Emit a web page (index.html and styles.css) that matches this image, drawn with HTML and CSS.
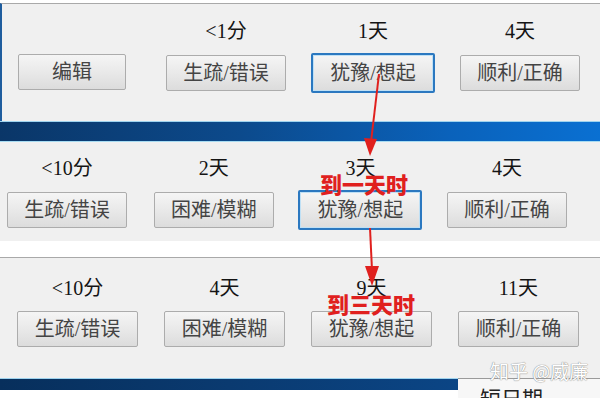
FILE: index.html
```html
<!DOCTYPE html>
<html lang="zh-CN">
<head>
<meta charset="utf-8">
<title>Anki 复习间隔</title>
<link rel="stylesheet" href="styles.css">
</head>
<body>
<div class="screen">
  <section class="panel panel-1">
    <div class="cell cell-edit"><span class="label">&nbsp;</span><button class="btn">编辑</button></div>
    <div class="cell"><span class="label">&lt;1分</span><button class="btn">生疏/错误</button></div>
    <div class="cell"><span class="label">1天</span><button class="btn btn-focus">犹豫/想起</button></div>
    <div class="cell"><span class="label">4天</span><button class="btn">顺利/正确</button></div>
  </section>
  <div class="band band-top"></div>
  <section class="panel panel-2">
    <div class="cell"><span class="label">&lt;10分</span><button class="btn">生疏/错误</button></div>
    <div class="cell"><span class="label">2天</span><button class="btn">困难/模糊</button></div>
    <div class="cell"><span class="label">3天</span><button class="btn btn-focus">犹豫/想起</button></div>
    <div class="cell"><span class="label">4天</span><button class="btn">顺利/正确</button></div>
  </section>
  <div class="gap"></div>
  <section class="panel panel-3">
    <div class="cell"><span class="label">&lt;10分</span><button class="btn">生疏/错误</button></div>
    <div class="cell"><span class="label">4天</span><button class="btn">困难/模糊</button></div>
    <div class="cell"><span class="label">9天</span><button class="btn">犹豫/想起</button></div>
    <div class="cell"><span class="label">11天</span><button class="btn">顺利/正确</button></div>
  </section>
  <div class="footer">
    <div class="band band-bottom"></div>
    <div class="tail">短日期</div>
  </div>

  <svg class="annot" width="600" height="398" viewBox="0 0 600 398">
    <line x1="379" y1="74" x2="371" y2="142" stroke="#e0201e" stroke-width="2"/>
    <polygon points="364,138 377,139 370,156" fill="#e0201e"/>
    <line x1="370" y1="228" x2="372" y2="270" stroke="#e0201e" stroke-width="2"/>
    <polygon points="365,266 379,266 372,286" fill="#e0201e"/>
  </svg>
  <span class="note note-1">到一天时</span>
  <span class="note note-2">到三天时</span>
  <span class="watermark">知乎 @威廉</span>
</div>
</body>
</html>
```

FILE: styles.css
```css
* { box-sizing: border-box; }

html, body {
  margin: 0;
  padding: 0;
  background: #ffffff;
}

.screen {
  position: relative;
  width: 600px;
  height: 398px;
  overflow: hidden;
  padding-top: 3px;
  font-family: "Liberation Serif", "Noto Sans CJK SC", serif;
}

.panel {
  display: grid;
  background: #f0f0f0;
}

.panel-1 {
  border-top: 1px solid #a9a9a9;
  border-left: 2px solid #1f5d9e;
  height: 118px;
  padding: 15px 0 0 16px;
  grid-template-columns: 121px 120px 120px 120px;
  column-gap: 27px;
}
.cell-edit { align-items: flex-start; }
.cell-edit .btn { width: 108px; margin-top: -1px; }

.panel-2 {
  height: 99px;
  padding: 14px 0 0 7px;
  grid-template-columns: repeat(4, 120px);
  column-gap: 26.7px;
}

.panel-3 {
  border-top: 1px solid #a9a9a9;
  height: 121px;
  padding: 18px 0 0 17px;
  grid-template-columns: repeat(4, 121px);
  column-gap: 26px;
}
.panel-3 .cell { gap: 11px; }

.cell {
  display: flex;
  flex-direction: column;
  gap: 12px;
}

.label {
  height: 24px;
  line-height: 24px;
  font-size: 20px;
  text-align: center;
  color: #141414;
}

.btn {
  height: 36px;
  padding: 0;
  font-family: "Liberation Serif", "Noto Sans CJK SC", serif;
  font-size: 20px;
  line-height: 34px;
  color: #444444;
  border: 1px solid #acacac;
  border-radius: 2px;
  background: linear-gradient(#f5f5f5, #e9e9e9 50%, #dcdcdc);
}

.btn-focus {
  margin: -2px;
  height: 40px;
  border: 2px solid #2b78c0;
  box-shadow: inset 0 0 0 1px #bfe0f5;
}

.band {
  background: linear-gradient(90deg, #0a3668 0%, #0c4a8c 40%, #0a62bb 75%, #0a70d2 100%);
}

.band-top {
  height: 21px;
  border-top: 1px solid #9fd3ee;
  border-bottom: 1px solid #a8dcf2;
}

.gap {
  height: 16px;
  background: #ffffff;
}

.footer {
  display: flex;
  height: 20px;
}

.band-bottom {
  width: 458px;
  height: 12px;
  border-top: 1px solid #9fd3ee;
  background: linear-gradient(90deg, #072f5c 0%, #0a3a70 50%, #0b4585 100%);
}

.tail {
  flex: 1;
  border-top: 1px solid #9a9a9a;
  background: #f7f7f7;
  padding: 6px 0 0 22px;
  font-family: "Noto Sans CJK SC", sans-serif;
  font-size: 21px;
  line-height: 24px;
  color: #222;
}

.annot {
  position: absolute;
  left: 0;
  top: 0;
  pointer-events: none;
}

.note {
  position: absolute;
  font-family: "Noto Sans CJK SC", sans-serif;
  font-weight: 900;
  font-size: 22px;
  line-height: 22px;
  color: #e0201e;
}
.note-1 { left: 320px; top: 172px; }
.note-2 { left: 327px; top: 292px; }

.watermark {
  position: absolute;
  left: 490px;
  top: 359px;
  font-family: "Noto Sans CJK SC", sans-serif;
  font-size: 19px;
  line-height: 24px;
  color: #ffffff;
  text-shadow: 0 0 1px #8a8a8a, 0 0 1px #8a8a8a;
}
```
